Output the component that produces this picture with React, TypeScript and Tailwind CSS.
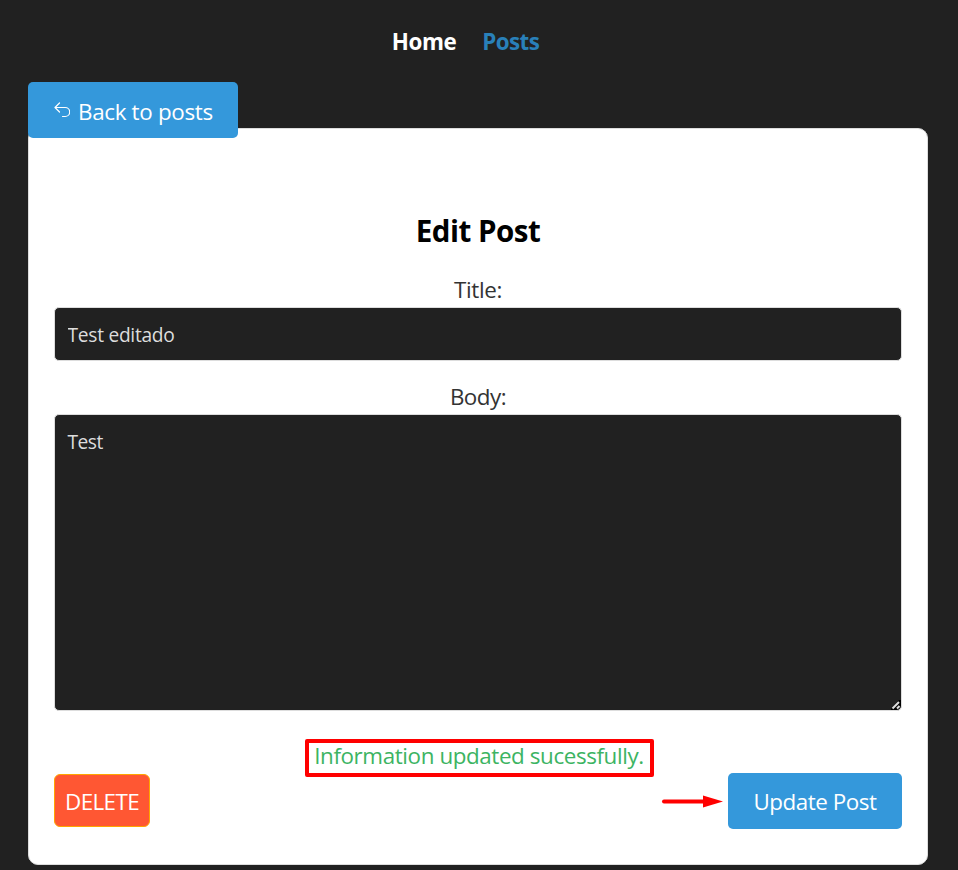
import React from "react";

function BackIcon() {
  return (
    <svg width="16" height="16" viewBox="0 0 16 16" className="mr-[8px] mb-[3px] shrink-0">
      <path
        d="M5.5 1L1 5.5L5.5 10M1 5.5H11.2A4.3 4.3 0 0 1 11.2 14.500H8.5"
        fill="none"
        stroke="white"
        strokeWidth="1.2"
        strokeLinecap="round"
        strokeLinejoin="round"
      />
    </svg>
  );
}

export default function App() {
  return (
    <div className="h-[870px] overflow-hidden bg-[#212121] pr-[30px] pl-[28px] font-['Open_Sans','Noto_Sans',sans-serif] text-[22.4px] leading-[34px]">
      <nav className="flex h-[82px] justify-center gap-[26px] pt-[25px] pr-[25px] font-bold">
        <a className="tracking-[-0.4px] text-white">Home</a>
        <a className="tracking-[-0.6px] text-[#2980b9]">Posts</a>
      </nav>
      <button className="relative z-10 flex h-[56px] w-[210px] items-center rounded-[5px] bg-[#3498db] pt-[3px] pl-[26px] whitespace-nowrap text-white">
        <BackIcon />
        <span className="tracking-[-0.32px]">Back to posts</span>
      </button>
      <main className="mt-[-10px] flex h-[737px] w-[900px] flex-col rounded-[10px] border border-[#ddd] bg-white px-[25px] pt-[79px] text-center text-[#333]">
        <h2 className="h-[65px] text-[29.5px] leading-[46px] font-bold tracking-[-0.5px] text-black">Edit Post</h2>
        <label className="h-[34px] tracking-[-0.35px]">Title:</label>
        <input
          defaultValue="Test editado"
          className="block h-[54px] w-full rounded-[5px] border border-[#ddd] bg-[#212121] px-[12.5px] text-[19.2px] tracking-[-0.28px] text-[#ddd] outline-none"
        />
        <label className="mt-[19px] h-[34px] tracking-[-0.5px]">Body:</label>
        <div className="relative h-[297px]">
          <textarea
            defaultValue="Test"
            className="block h-full w-full resize-none rounded-[5px] border border-[#ddd] bg-[#212121] px-[12.5px] py-[13px] text-[19.2px] leading-[28px] tracking-[-0.5px] text-[#ddd] outline-none"
          />
          <svg width="10" height="10" viewBox="0 0 10 10" className="absolute right-[1px] bottom-[1px]">
            <path d="M0 9L8 0H10V6L6 10H0Z" fill="#000" />
            <path d="M1.5 8.5L8 2M6 8.5L8.5 6" stroke="#ddd" strokeWidth="2" />
          </svg>
        </div>
        <div className="mt-[28px] ml-[2px] flex h-[38px] w-[349px] items-center justify-center self-center rounded-[2px] border-4 border-[#ff0000] pb-[4px] whitespace-nowrap text-[#3cb462]">
          <span className="tracking-[-0.4px]">Information updated sucessfully.</span>
        </div>
        <div className="mt-[-4px] flex h-[56px] items-center">
          <button className="mb-[1px] h-[53px] w-[96px] rounded-[6px] border border-[#ffa500] bg-[#ff5733] pt-[2px] tracking-[-0.6px] text-white">
            DELETE
          </button>
          <svg width="62" height="14" viewBox="0 0 62 14" className="ml-auto">
            <path d="M3 7.5H45" stroke="#ff0000" strokeWidth="4" strokeLinecap="round" />
            <path d="M42 1.5L62 7.5L42 13.5Z" fill="#ff0000" />
          </svg>
          <button className="ml-[5px] h-[56px] w-[174px] rounded-[5px] bg-[#3498db] pt-[2px] tracking-[-0.45px] whitespace-nowrap text-white">
            Update Post
          </button>
        </div>
      </main>
    </div>
  );
}
